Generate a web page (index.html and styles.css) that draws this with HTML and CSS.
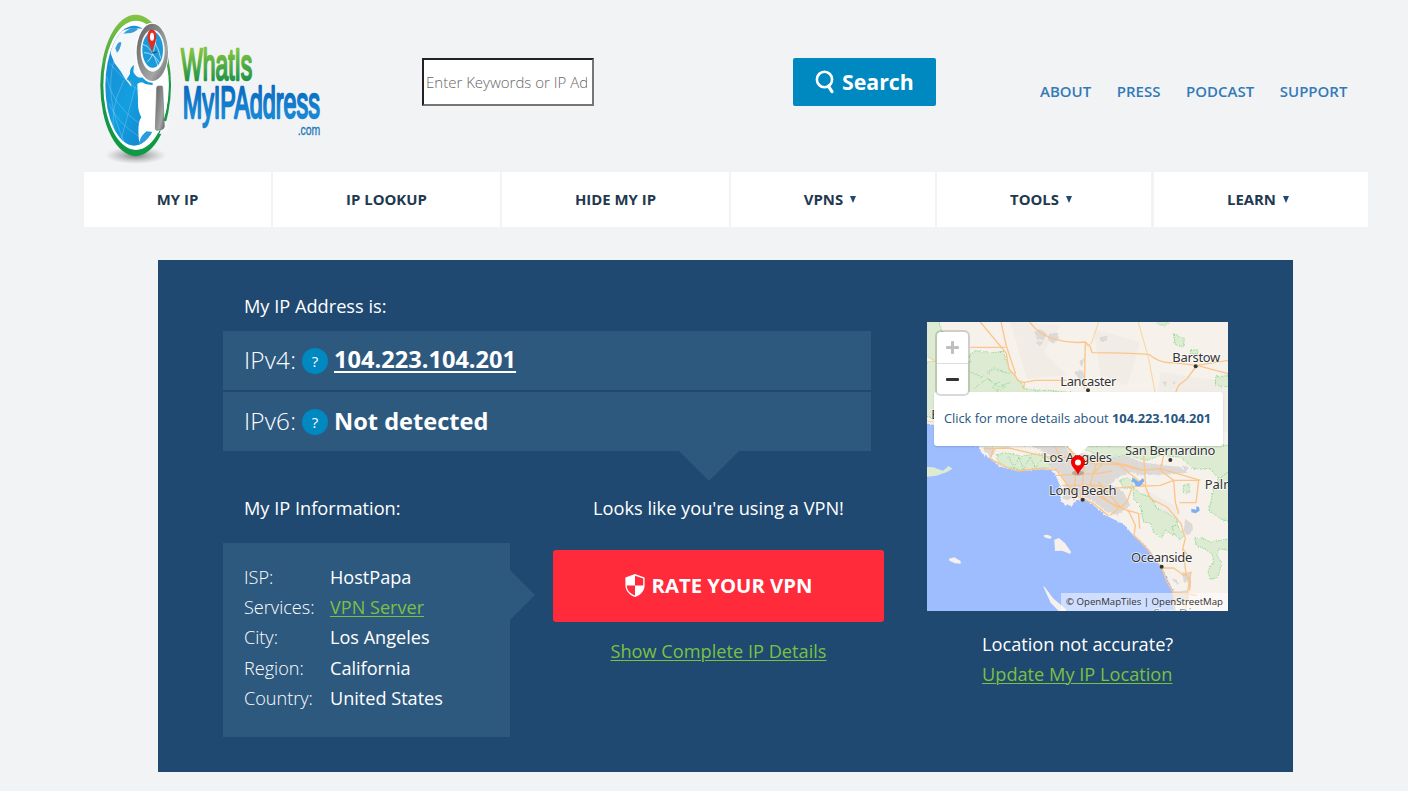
FILE: index.html
```html
<!DOCTYPE html>
<html lang="en">
<head>
<meta charset="utf-8">
<title>What Is My IP Address</title>
<link rel="stylesheet" href="styles.css">
</head>
<body>
<header class="header">
  <a class="logo" aria-label="WhatIsMyIPAddress.com">
    <svg width="260" height="172" viewBox="0 0 780 516">
      <defs>
        <linearGradient id="ring" x1="0" y1="0" x2="0" y2="1"><stop offset="0" stop-color="#85c443"/><stop offset=".25" stop-color="#5bb045"/><stop offset=".5" stop-color="#1c9446"/><stop offset="1" stop-color="#0d9a45"/></linearGradient>
        <linearGradient id="sea" x1="0" y1="0" x2="1" y2="1"><stop offset="0" stop-color="#1a86d0"/><stop offset=".5" stop-color="#139fe0"/><stop offset="1" stop-color="#1478c6"/></linearGradient>
        <linearGradient id="metal" x1="0" y1="0" x2="1" y2="1"><stop offset="0" stop-color="#5f6163"/><stop offset=".45" stop-color="#8b8c8e"/><stop offset=".7" stop-color="#a5a6a8"/><stop offset="1" stop-color="#5f6163"/></linearGradient>
        <linearGradient id="what" x1="0" y1="0" x2="0" y2="1"><stop offset=".2" stop-color="#82c341"/><stop offset=".85" stop-color="#1d9347"/></linearGradient>
        <linearGradient id="addr" x1="0" y1="0" x2="0" y2="1"><stop offset=".2" stop-color="#0a6abf"/><stop offset=".75" stop-color="#1787d4"/></linearGradient>
        <radialGradient id="shade"><stop offset="0" stop-color="#555" stop-opacity=".75"/><stop offset="1" stop-color="#888" stop-opacity="0"/></radialGradient>
        <clipPath id="globe"><ellipse cx="150" cy="257" rx="86" ry="180"/></clipPath>
        <clipPath id="inner"><ellipse cx="156" cy="256" rx="98" ry="194"/></clipPath>
      </defs>
      <ellipse cx="155" cy="466" rx="92" ry="26" fill="url(#shade)"/>
      <ellipse cx="155" cy="256" rx="106" ry="212" fill="url(#ring)"/>
      <ellipse cx="156" cy="256" rx="98" ry="194" fill="#fff"/>
      <g clip-path="url(#globe)">
        <rect x="60" y="70" width="190" height="370" fill="url(#sea)"/>
        <path d="M80 160L86 115Q110 80 175 86L190 150L180 230Q160 240 148 216L150 195Q136 205 138 222L128 238Q142 246 142 260Q122 238 110 214L92 190Q84 172 80 160Z" fill="#f4f7fa"/>
        <path d="M160 252Q172 242 184 252L250 262L250 380L210 400L188 395Q172 410 166 430Q158 370 172 352Q160 330 162 300Z" fill="#fff"/>
        <path d="M94 145q10-25 18-17q-3 20-13 30zM118 101q20-22 45-15q-10 12-32 14zM132 238q12 4 20 14l-12-2z" fill="#3c9bda"/>
        <path d="M166 425Q172 405 188 394L206 396Q196 420 180 436L160 440Z" fill="#2a9ddd"/>
        <path d="M78 190Q104 225 168 275M68 230Q80 310 165 370M90 180Q60 290 120 425M120 240Q70 340 95 410M154 260Q130 350 112 415M75 310Q100 370 166 410" fill="none" stroke="#8ad3f2" stroke-width="1.5" opacity=".8"/>
      </g>
      <path d="M206 240L280 215V390L232 402L205 395Z" fill="#fff" clip-path="url(#inner)"/>
      <path d="M238 364L256 362L248 400L226 402Z" fill="#f4f6f7"/>
      <path d="M218 263Q218 258 224 258H230Q236 257 236 262L241 380Q240 388 230 389L219 391Q214 391 214 385Z" fill="url(#metal)" stroke="#77787a" stroke-width="2"/>
      <ellipse cx="204" cy="158" rx="50" ry="90" fill="#fff"/>
      <ellipse cx="205" cy="157" rx="47" ry="86" fill="url(#metal)"/>
      <ellipse cx="206" cy="152" rx="36" ry="63" fill="#f8fafb"/>
      <ellipse cx="206" cy="149" rx="31" ry="54" fill="#1a9ad9"/>
      <path d="M187 105Q219 120 230 175M180 158Q210 158 226 188M190 186Q210 170 216 118M177 133Q202 138 222 198" fill="none" stroke="#e4f4fb" stroke-width="2"/>
      <path d="M205 159l13-3" stroke="#145685" stroke-width="4"/>
      <path d="M204 160C201 135 190 129 190 111C190 81 217 81 217 109C217 129 207 136 204 160Z" fill="#e12d24"/>
      <ellipse cx="204" cy="110" rx="6" ry="12" fill="#fff"/>
      <g class="logo-text">
        <text x="291" y="240" font-size="134" textLength="214" lengthAdjust="spacingAndGlyphs" fill="url(#what)" stroke="url(#what)" stroke-width="7">WhatIs</text>
        <text x="296" y="353" font-size="134" textLength="412" lengthAdjust="spacingAndGlyphs" fill="url(#addr)" stroke="url(#addr)" stroke-width="7">MyIPAddress</text>
        <text x="641" y="404" font-size="46" textLength="68" lengthAdjust="spacingAndGlyphs" fill="#2378b8" stroke="#2378b8" stroke-width="1">.com</text>
      </g>
    </svg>
  </a>
  <form class="search">
    <input class="search-input" type="text" placeholder="Enter Keywords or IP Address...">
    <button class="search-button" type="button">
      <svg width="20" height="24" viewBox="0 0 20 24" fill="none" stroke="#fff"><ellipse cx="9.5" cy="9.5" rx="7.6" ry="7.8" stroke-width="2.6"/><path d="M13.4 16.2L17 21.6" stroke-width="3.2" stroke-linecap="round"/></svg>
      <span>Search</span>
    </button>
  </form>
  <nav class="top-links"><a>ABOUT</a><a>PRESS</a><a>PODCAST</a><a>SUPPORT</a></nav>
</header>

<nav class="main-nav">
  <a>MY IP</a><a>IP LOOKUP</a><a>HIDE MY IP</a>
  <a>VPNS<i class="caret"></i></a><a>TOOLS<i class="caret"></i></a><a>LEARN<i class="caret"></i></a>
</nav>

<main class="panel">
  <section class="details">
    <h2 class="label">My IP Address is:</h2>
    <div class="ip-list">
      <div class="ip-row"><span class="ip-kind">IPv4:</span><span class="help">?</span><a class="ip-value ip-link">104.223.104.201</a></div>
      <div class="ip-row"><span class="ip-kind">IPv6:</span><span class="help">?</span><span class="ip-value">Not detected</span></div>
    </div>
    <div class="lower">
      <div class="info">
        <h2 class="label">My IP Information:</h2>
        <dl class="info-box">
          <dt>ISP:</dt><dd>HostPapa</dd>
          <dt>Services:</dt><dd><a class="green">VPN Server</a></dd>
          <dt>City:</dt><dd>Los Angeles</dd>
          <dt>Region:</dt><dd>California</dd>
          <dt>Country:</dt><dd>United States</dd>
        </dl>
      </div>
      <div class="vpn">
        <p class="vpn-note">Looks like you're using a VPN!</p>
        <a class="rate">
          <svg width="20" height="23" viewBox="0 0 20 23"><path d="M10 0L19.6 3.4V11.5C19.6 17 15.5 21 10 23C4.5 21 .4 17 .4 11.5V3.4Z" fill="#fff"/><path d="M10 1.8L18.2 4.6V11.5H10ZM1.8 11.5H10V21.5C5.2 19.7 1.8 16.3 1.8 11.5Z" fill="#ff2a3a"/></svg>
          <span>RATE YOUR VPN</span>
        </a>
        <a class="green">Show Complete IP Details</a>
      </div>
    </div>
  </section>

  <aside class="location">
    <div class="map">
      <svg class="map-art" width="301" height="289" viewBox="0 0 903 867">
        <defs>
          <filter id="rough" x="-5%" y="-5%" width="110%" height="110%"><feTurbulence type="fractalNoise" baseFrequency=".16" numOctaves="2" seed="4"/><feDisplacementMap in="SourceGraphic" scale="9" xChannelSelector="R" yChannelSelector="G"/></filter>
        </defs>
        <rect width="903" height="867" fill="#f6f1eb"/>
        <g fill="#f1ece6"><path d="M250 0L400 10L350 90L420 160L300 170ZM500 20L640 60L600 190L520 160ZM700 150L900 180V330L690 240ZM650 500L760 560L740 640L640 590Z"/></g>
        <g class="park" filter="url(#rough)">
          <path d="M-10 -10H32L45 30L65 38L62 75L85 110L110 125L130 118L128 98L145 86L195 92L228 88L248 142L272 170L292 200L330 205L370 205L430 212V370H290L160 372L90 310L20 290L-10 280V120L25 118L-10 95Z"/>
          <path d="M130 150L165 165L200 140L248 155M140 200L180 170L215 195L250 180M195 195L215 180L235 195L210 205Z" fill="none"/>
          <path d="M440 370H910V473L870 465L850 440L800 440L760 405L700 400L660 415L600 400L540 410L480 385Z"/>
          <path d="M210 398L240 393L280 402L340 395L378 415L392 435L300 444L240 438L210 415Z"/>
          <path d="M245 405L262 440L275 405L290 442L310 405L325 436L350 405L370 432" fill="none"/>
          <path d="M619 496L640 515L672 525L690 560L715 570L750 592L738 640L715 622L705 646L680 633L672 605L650 600L640 550L620 530Z"/>
          <path d="M578 475L600 466L622 480L615 497L590 499ZM770 490L786 485L788 510L768 512ZM740 36L772 50L769 75L745 68ZM790 86L812 82L812 96L790 96ZM866 165L910 160V195L865 190ZM688 -8H735L715 10L692 8Z"/>
          <path d="M803 647L830 650L850 660L910 650V685L875 680L870 700L885 725L872 765L850 772L843 745L860 720L855 695L835 682L808 670Z"/>
          <path d="M846 565L860 500L875 470L910 445V600L880 590ZM735 613L750 607L755 617L773 640L760 652L740 635Z"/>
        </g>
        <path filter="url(#rough)" fill="#9ebdfe" d="M-15 302L20 308L80 360L155 372L166 397L190 410L215 433L245 441L295 446L345 442L370 444L385 458L399 491L400 533L412 548L435 551L450 535L473 530L500 550L535 580L590 607L624 645L656 670L676 697L703 735L724 775L740 810L747 880H-15Z"/>
        <path class="park coast" d="M0 435L18 436L48 446L65 432L76 440L60 450L28 461L0 464Z"/>
        <g fill="#f6f1eb"><path d="M66 710L82 706L101 717V725L84 724L67 716ZM350 640L362 638L375 645L369 651L352 646ZM382 653L396 648L414 664L432 689L430 696L405 686L384 687ZM348 792L355 797L378 829L415 860L418 867H395L371 842Z"/></g>
        <g fill="#dcd9d7" filter="url(#rough)">
          <path d="M170 375L205 378L200 400L172 390ZM310 370L410 370L430 392L480 395L525 410L600 402L650 422L710 430L760 435L780 453L700 458L635 460L610 450L570 468L550 488L590 510L610 550L570 580L540 570L490 532L455 520L420 535L407 530L415 485L400 455L365 430L370 400Z"/>
          <path d="M322 30L340 22L358 35L350 55L328 50ZM366 35L390 32L396 48L382 65L362 55ZM325 58L350 60L338 72ZM518 45L542 42L540 56L520 58ZM455 118L472 110L465 135ZM440 150L465 145L475 158L460 175ZM706 180L720 178L716 194ZM736 178L746 180L740 190ZM178 151L190 149L188 160ZM182 380L198 375L194 405L184 400ZM774 590L795 605L798 622L784 642L770 630ZM766 750L790 755L793 782L770 780ZM735 770L755 775L750 790ZM738 810L780 805L788 830L745 850ZM765 430L785 435L775 455Z"/>
        </g>
        <g class="road">
          <path d="M160 0L238 94L246 142L264 160L272 175L292 182L290 202M222 0L238 72L266 156M292 181L325 175H420M308 0Q335 38 385 52Q430 65 475 60L490 75L495 92Q590 92 665 97Q700 125 735 122L810 130L903 115M810 130L903 155M806 135L780 170L755 190L743 218M475 62L472 200M130 76H235"/>
          <path class="minor" d="M515 0L493 65L475 72M634 0L665 110L684 210M0 103L25 116M0 297L18 300"/>
          <path d="M170 380L245 378L340 400L390 408L430 405L515 415L590 427L650 445L700 440L820 475M200 380L190 410L225 430L270 447L350 438L388 445M385 375L400 405M420 375L450 405L500 425L580 428L645 445"/>
          <path d="M385 440L430 500L455 525L500 545L545 582M390 460L450 457L510 455L555 447M405 490H510L550 500L620 494L700 490L740 475L815 475M430 380L445 460L440 535M475 410L460 535M510 420L490 485L545 540L590 560M540 410L500 455M575 427L615 460L655 493L670 530L720 555L762 605L775 650L767 680L790 710M650 400L656 495M710 400L700 445L740 475L745 540L755 575M815 475L807 542H758"/>
          <path d="M515 480L575 550L605 568L625 610L621 640L660 680L703 735M505 515L570 555L635 575L638 620M615 497L600 540L550 580M703 735L720 780L738 810L742 867M703 738L740 738L770 760L792 750L780 820L775 867M767 680L778 760L790 780L788 805M740 810L810 820"/>
        </g>
        <path fill="#81aeef" d="M617 466L635 479L648 468L652 477L640 493L626 492L621 480L613 480ZM793 560L808 563L808 553L816 555L818 566L806 574L793 571Z"/>
        <g fill="#333"><circle cx="806" cy="133" r="6"/><circle cx="483" cy="205" r="6"/><circle cx="730" cy="414" r="6"/><circle cx="467" cy="533" r="6"/><circle cx="704" cy="734" r="6"/></g>
        <g class="place">
          <text x="736" y="121" textLength="144">Barstow</text>
          <text x="400" y="192" textLength="168">Lancaster</text>
          <text x="348" y="420" textLength="207">Los Angeles</text>
          <text x="594" y="400" textLength="271">San Bernardino</text>
          <text x="366" y="520" textLength="203">Long Beach</text>
          <text x="833" y="500">Palm Springs</text>
          <text x="612" y="721" textLength="184">Oceanside</text>
          <text x="678" y="887">San Diego</text>
          <text x="13" y="290">B</text>
        </g>
      </svg>
      <div class="popup">Click for more details about&nbsp;<b>104.223.104.201</b></div>
      <div class="zoom-control"><span class="zoom-in"></span><span class="zoom-out"></span></div>
      <svg class="pin" width="16" height="22" viewBox="0 0 16 22"><ellipse cx="8" cy="18" rx="6" ry="2.5" fill="#777" opacity=".45"/><path d="M8 20C6.5 15 1 12 1 7.2A7 7 0 0 1 15 7.2C15 12 9.5 15 8 20Z" fill="#f50000"/><circle cx="8" cy="7.6" r="3" fill="#fff"/></svg>
      <div class="credit">© OpenMapTiles | OpenStreetMap</div>
    </div>
    <div class="accuracy"><p>Location not accurate?</p><a class="green">Update My IP Location</a></div>
  </aside>
</main>
</body>
</html>
```

FILE: styles.css
```css
* { box-sizing: border-box; }
body {
  margin: 0;
  height: 791px;
  overflow: hidden;
  background: #f1f3f5;
  font-family: "Open Sans", "Noto Sans", sans-serif;
  color: #fff;
}
p, h2, dl, dd { margin: 0; font-weight: inherit; font-size: inherit; }

.header { display: flex; height: 172px; padding-left: 84px; }
.logo { width: 338px; }
.logo svg { display: block; }
.logo-text { font-family: "Liberation Sans", Arial, sans-serif; stroke-linejoin: round; }
.search { display: flex; align-items: flex-start; justify-content: space-between; width: 514px; padding-top: 58px; }
.search-input {
  width: 172px;
  height: 48px;
  padding: 1px 5px 1px 2px;
  border: 2px solid;
  border-color: #212226 #767676 #767676 #212226;
  border-radius: 0;
  background: #fff;
  font: 300 15px "Open Sans", sans-serif;
}
.search-input::placeholder { color: #666; opacity: 1; }
.search-button {
  display: flex;
  align-items: center;
  gap: 7px;
  width: 143px;
  height: 48px;
  padding: 0 0 0 22px;
  border: 0;
  border-radius: 2px;
  background: #0088c0;
  color: #fff;
  font: 700 21.3px "Open Sans", sans-serif;
}
.search-button span { margin-top: -2px; }
.top-links { display: flex; gap: 25.7px; padding: 81px 0 0 104px; font-size: 14.97px; line-height: 20px; font-weight: 600; color: #337ab7; }

.main-nav {
  display: grid;
  grid-template-columns: 187px 227px 227px 204px 214px 215px;
  column-gap: 2px;
  width: 1284px;
  height: 55px;
  margin-left: 84px;
}
.main-nav a { display: flex; align-items: center; justify-content: center; padding-bottom: 2px; background: #fff; color: #22384f; font-size: 14.9px; font-weight: 700; }
.main-nav a:last-child { margin-left: 1px; }
.caret { margin: 1px 6px 0 7px; border: 3px solid transparent; border-top: 7px solid #1f4971; border-bottom: 0; }

.panel { display: flex; gap: 56px; width: 1135px; height: 512px; margin: 33px 0 0 158px; padding: 33px 0 0 65px; background: #1f4971; }
.details { width: 648px; }
.label { padding-left: 21px; font-size: 18.2px; line-height: 26px; }
.ip-list { position: relative; display: grid; row-gap: 2px; margin-top: 12px; }
.ip-list::after { content: ""; position: absolute; left: 456px; top: 120px; border: 30px solid transparent; border-top-color: #2d597f; border-bottom: 0; }
.ip-row { display: flex; align-items: center; height: 59px; padding: 0 0 2px 21px; background: #2d597f; }
.ip-row:first-child { padding-bottom: 3px; }
.ip-kind { width: 58px; font-size: 24.3px; font-weight: 350; letter-spacing: .2px; }
.help { width: 26px; height: 26px; margin: 3px 6px 0 0; border-radius: 50%; background: #0088c0; font-size: 15px; line-height: 26px; text-align: center; }
.ip-value { font-size: 23.6px; line-height: 32px; font-weight: 700; }
.ip-link { text-decoration: underline; text-decoration-thickness: 2px; text-underline-offset: 3px; }

.lower { display: flex; gap: 43px; margin-top: 44px; }
.info { width: 287px; flex-shrink: 0; }
.info-box {
  position: relative;
  display: grid;
  grid-template-columns: 86px 1fr;
  grid-auto-rows: 30.2px;
  height: 194px;
  margin-top: 22px;
  padding: 19px 21px;
  background: #2d597f;
  font-size: 18.1px;
  line-height: 30px;
}
.info-box::after { content: ""; position: absolute; left: 287px; top: 27px; border: 25px solid transparent; border-left-color: #2d597f; border-right: 0; }
.info-box dt { font-weight: 300; }
.info-box dd { font-weight: 450; }
.green { color: #7ac143; text-decoration: underline; text-decoration-thickness: 1px; text-underline-offset: 2px; }

.vpn { display: flex; flex-direction: column; align-items: center; width: 331px; flex-shrink: 0; font-size: 18.2px; line-height: 26px; }
.rate {
  display: flex;
  align-items: center;
  justify-content: center;
  gap: 7px;
  width: 331px;
  height: 72px;
  margin: 29px 0 16px;
  padding-bottom: 2px;
  border-radius: 3px;
  background: #ff2a3a;
  font-size: 20.3px;
  font-weight: 700;
}

.location { width: 301px; padding-top: 29px; }
.map { position: relative; width: 301px; height: 289px; overflow: hidden; }
.map-art { display: block; }
.park { fill: #ddebd2; stroke: #83d88a; stroke-width: 2.5; stroke-dasharray: 5 3; }
.coast { stroke: none; }
.road { fill: none; stroke: #fbc58b; stroke-width: 4; stroke-linejoin: round; }
.minor { stroke: #fbd49a; stroke-width: 3; }
.place { font-family: "Noto Sans", sans-serif; font-size: 39px; fill: #333; stroke: #fff; stroke-width: 5px; stroke-opacity: .75; paint-order: stroke; }
.zoom-control { position: absolute; left: 8px; top: 8px; width: 35px; height: 66px; border: 2px solid rgba(0, 0, 0, .15); border-radius: 6px; background: #fff; background-clip: padding-box; }
.zoom-in, .zoom-out { display: grid; place-items: center; height: 30px; }
.zoom-in { height: 32px; border-bottom: 1px solid #ddd; }
.zoom-in::before, .zoom-in::after, .zoom-out::before { content: ""; grid-area: 1 / 1; width: 13px; height: 3px; border-radius: 1px; background: #333; }
.zoom-in::before, .zoom-in::after { background: #bfbfbf; }
.zoom-in::after { width: 3px; height: 13px; }
.popup {
  position: absolute;
  left: 7px;
  top: 70px;
  width: 289px;
  height: 54px;
  padding-right: 2px;
  border-radius: 3px;
  background: #fff;
  color: #265580;
  font-size: 12.85px;
  line-height: 53px;
  text-align: center;
  white-space: nowrap;
  box-shadow: 0 1px 2px rgba(0, 0, 0, .15);
}
.popup::after { content: ""; position: absolute; left: 134px; top: 54px; border: 10px solid transparent; border-top-color: #fff; border-bottom: 0; }
.pin { position: absolute; left: 143px; top: 133px; }
.credit { position: absolute; right: 0; bottom: 0; width: 167px; height: 18px; padding-left: 5px; background: rgba(255, 255, 255, .5); color: #333; font-size: 9.65px; line-height: 18px; white-space: nowrap; }
.accuracy { padding: 18px 0 0 55px; font-size: 18.2px; line-height: 30px; white-space: nowrap; }
```
